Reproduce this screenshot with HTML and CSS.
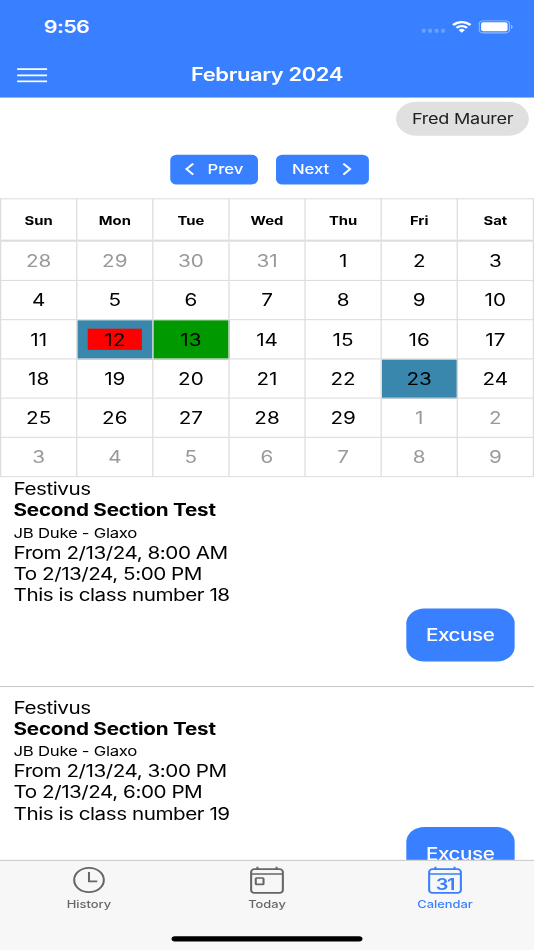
FILE: index.html
```html
<!DOCTYPE html>
<html>
<head>
<meta charset="utf-8">
<meta name="viewport" content="width=device-width, initial-scale=1">
<title>Calendar</title>
<link rel="stylesheet" href="styles.css">
</head>
<body>
<div class="app">
	<header class="header">
		<div class="status">
			<span class="clock">9:56</span>
			<div class="status-icons">
				<span class="dots"><i></i><i></i><i></i><i></i></span>
				<svg class="wifi" viewBox="0 0 16 12">
					<path d="M8 2.400c2.200 0 4.200.85 5.750 2.350h.3l1.200-1.200v-.3A10.500 10.500 0 0 0 .75 3.250v.3l1.200 1.200h.3A8.300 8.300 0 0 1 8 2.400z"/>
					<path d="M8 6.150c1.200 0 2.300.45 3.200 1.250h.3l1.200-1.200v-.3a6.850 6.850 0 0 0-9.400 0v.3l1.200 1.200h.3c.9-.8 2-1.250 3.200-1.250z"/>
					<path d="M10.300 9v-.3a3.550 3.550 0 0 0-4.600 0V9L8 11.500z"/>
				</svg>
				<svg class="battery" viewBox="0 0 27 13">
					<rect class="shell" x=".5" y=".5" width="23.500" height="11.500" rx="3"/>
					<rect x="2" y="2" width="20.500" height="8.500" rx="1.700"/>
					<path class="cap" d="M25.200 4.300c1.700.8 1.700 3.200 0 4z"/>
				</svg>
			</div>
		</div>
		<div class="toolbar">
			<svg class="menu" viewBox="0 0 24 14"><path d="M.3 1.200h23.200M.3 7h23.200M.3 12.800h23.200"/></svg>
			<h1>February 2024</h1>
		</div>
	</header>

	<main class="content">
		<div class="user"><span class="chip">Fred Maurer</span></div>
		<div class="nav">
			<button class="prev"><svg viewBox="0 0 8 13"><path d="M6.800 1.400 1.600 6.500l5.200 5.100"/></svg>Prev</button>
			<button class="next">Next<svg viewBox="0 0 8 13"><path d="M1.200 1.400 6.400 6.500l-5.200 5.100"/></svg></button>
		</div>

		<table class="month">
			<thead>
				<tr><th>Sun</th><th>Mon</th><th>Tue</th><th>Wed</th><th>Thu</th><th>Fri</th><th>Sat</th></tr>
			</thead>
			<tbody>
				<tr><td class="muted">28</td><td class="muted">29</td><td class="muted">30</td><td class="muted">31</td><td>1</td><td>2</td><td>3</td></tr>
				<tr><td>4</td><td>5</td><td>6</td><td>7</td><td>8</td><td>9</td><td>10</td></tr>
				<tr><td>11</td><td class="event"><div class="absent">12</div></td><td class="selected">13</td><td>14</td><td>15</td><td>16</td><td>17</td></tr>
				<tr><td>18</td><td>19</td><td>20</td><td>21</td><td>22</td><td class="event">23</td><td>24</td></tr>
				<tr><td>25</td><td>26</td><td>27</td><td>28</td><td>29</td><td class="muted">1</td><td class="muted">2</td></tr>
				<tr><td class="muted">3</td><td class="muted">4</td><td class="muted">5</td><td class="muted">6</td><td class="muted">7</td><td class="muted">8</td><td class="muted">9</td></tr>
			</tbody>
		</table>

		<div class="list">
			<div class="item">
				<div>Festivus</div>
				<div class="title">Second Section Test</div>
				<div class="place">JB Duke - Glaxo</div>
				<div>From 2/13/24, 8:00 AM</div>
				<div>To 2/13/24, 5:00 PM</div>
				<div>This is class number 18</div>
				<button class="excuse">Excuse</button>
			</div>
			<div class="item">
				<div>Festivus</div>
				<div class="title">Second Section Test</div>
				<div class="place">JB Duke - Glaxo</div>
				<div>From 2/13/24, 3:00 PM</div>
				<div>To 2/13/24, 6:00 PM</div>
				<div>This is class number 19</div>
				<button class="excuse">Excuse</button>
			</div>
		</div>
	</main>

	<footer class="footer">
		<nav class="tabs">
			<a class="tab">
				<svg viewBox="0 0 30 30"><circle cx="15" cy="15" r="11.500"/><path d="M15 7.400v8.800h6.400"/></svg>
				<span>History</span>
			</a>
			<a class="tab">
				<svg viewBox="0 0 30 30"><rect x="2.700" y="4.800" width="24.600" height="22.400" rx="2.500"/><path d="M2.700 9.300h24.600M7.600 2.500v2.300M22.400 2.500v2.300"/><rect x="6.300" y="13.100" width="6" height="6" rx=".7"/></svg>
				<span>Today</span>
			</a>
			<a class="tab active">
				<svg viewBox="0 0 30 30"><rect x="2.700" y="4.800" width="24.600" height="22.400" rx="2.500"/><path d="M2.700 9.300h24.600M7.600 2.500v2.300M22.400 2.500v2.300"/><text x="15" y="24">31</text></svg>
				<span>Calendar</span>
			</a>
		</nav>
		<div class="home"></div>
	</footer>
</div>
</body>
</html>
```

FILE: styles.css
```css
*{margin:0;padding:0;box-sizing:border-box;}
html,body{width:100%;height:100%;overflow:hidden;}
body{
	background:#fff;
	color:#000;
	font-family:Inter,"Liberation Sans",sans-serif;
	font-size:16px;
	line-height:20px;
}
button{border:0;font-family:inherit;color:#fff;background:#3880ff;}

/* 414x896 screen, stretched to the window */
.app{
	display:flex;
	flex-direction:column;
	width:414px;
	height:896px;
	transform:scale(1.28986,1.06027);
	transform-origin:0 0;
}

/* header */
.header{flex:none;height:92px;color:#fff;background:#3880ff;}
.status{
	display:flex;
	justify-content:space-between;
	height:48px;
	padding:15px 16.500px 0 34px;
}
.clock{font-size:16.500px;font-weight:600;letter-spacing:-.4px;}
.status-icons{display:flex;height:20px;align-items:center;}
.status-icons svg{fill:#fff;}
.dots{display:flex;gap:1.500px;margin:8px 4.500px 0 0;}
.dots i{width:3.500px;height:3.600px;border-radius:1px;background:#fff;opacity:.25;}
.wifi{width:16px;height:13px;margin-right:5px;}
.battery{width:27px;height:13px;}
.battery .shell{fill:none;stroke:#fff;opacity:.45;}
.battery .cap{opacity:.5;}
.toolbar{
	display:grid;
	grid-template-columns:40px 1fr 40px;
	align-items:center;
	height:44px;
	padding:0 13px;
}
.menu{width:24px;height:14px;margin-top:1px;stroke:#fff;stroke-width:1.700;}
.toolbar h1{
	text-align:center;
	font-size:17px;
	font-weight:600;
	letter-spacing:-.3px;
}

/* content */
.content{flex:1;min-height:0;overflow:hidden;}
.user{display:flex;justify-content:flex-end;padding:4px;}
.chip{
	height:32px;
	padding:0 12px;
	border-radius:16px;
	line-height:32.500px;
	font-size:14px;
	letter-spacing:-.2px;
	color:#222;
	background:#e0e0e0;
}
.nav{display:flex;justify-content:center;gap:14px;padding:14px 0 13.500px;margin-left:3px;}
.nav button{
	display:flex;
	align-items:center;
	justify-content:center;
	height:27.500px;
	padding-bottom:1px;
	border-radius:5px;
	font-size:13px;
	font-weight:500;
	letter-spacing:-.1px;
}
.nav .prev{width:68.500px;gap:10px;}
.nav .next{width:71.500px;gap:10px;}
.nav svg{width:8px;height:13px;margin-top:1px;fill:none;stroke:#fff;stroke-width:1.700;}

.month{
	width:100%;
	table-layout:fixed;
	border-collapse:collapse;
	text-align:center;
}
.month th,.month td{border:1px solid #ddd;}
.month th{height:39.500px;padding-top:1px;border-bottom-width:2px;font-size:11.500px;font-weight:700;}
.month td{height:37px;padding:8px;}
.month .muted{color:#999;}
.month .event{background:#3a87ad;}
.month .selected{background:#009900;}
.absent{background:#f00;}

.item{
	display:flex;
	flex-direction:column;
	height:206px;
	padding:8.500px 15px 0 10.500px;
	letter-spacing:-.36px;
	border-bottom:1px solid #c8c7cc;
}
.item:first-child{height:198px;padding-top:.5px;}
.title{font-weight:700;letter-spacing:-.17px;}
.place{height:20px;padding-top:2px;font-size:13px;line-height:19px;letter-spacing:-.22px;}
.excuse{
	align-self:flex-end;
	width:84.500px;
	height:49.500px;
	margin-top:3.500px;
	padding-top:1px;
	border-radius:14px;
	font-size:16px;
	font-weight:500;
	letter-spacing:-.36px;
}

/* footer */
.footer{flex:none;height:85px;border-top:1px solid #ccc;background:#f7f7f7;}
.tabs{display:flex;height:70.500px;}
.tab{
	flex:1;
	display:flex;
	flex-direction:column;
	align-items:center;
	padding-top:3px;
	font-size:10px;
	font-weight:500;
	line-height:15px;
	color:#666;
}
.tab svg{width:30px;height:30px;fill:none;stroke:currentColor;stroke-width:1.600;}
.tab text{
	fill:currentColor;
	stroke:none;
	font-size:15.500px;
	font-weight:600;
	letter-spacing:-1px;
	text-anchor:middle;
}
.tab.active{color:#3880ff;}
.home{width:148px;height:5px;margin:0 auto;border-radius:3px;background:#000;}
```
